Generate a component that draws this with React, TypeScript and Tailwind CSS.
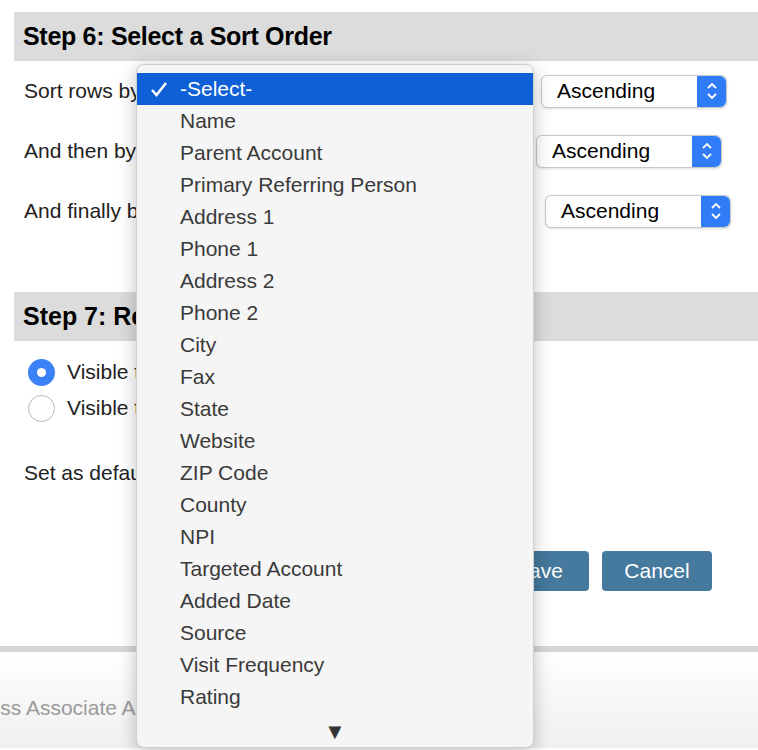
const items = [
  'Name', 'Parent Account', 'Primary Referring Person', 'Address 1', 'Phone 1', 'Address 2',
  'Phone 2', 'City', 'Fax', 'State', 'Website', 'ZIP Code', 'County', 'NPI',
  'Targeted Account', 'Added Date', 'Source', 'Visit Frequency', 'Rating',
];

function Stepper() {
  return (
    <div className="w-[29px] h-full bg-[#2f7cf6] flex items-center justify-center rounded-r-[6px]">
      <svg width="12" height="20" viewBox="0 0 12 20" fill="none" stroke="white" strokeWidth="1.8">
        <path d="M2 7l4-4 4 4M2 13l4 4 4-4" />
      </svg>
    </div>
  );
}

function OrderSelect() {
  return (
    <div className="w-[186px] h-[33px] flex items-center bg-white border border-[#c8c8c8] rounded-[6px] shadow-sm">
      <span className="flex-1 pl-[15px] text-[21px] text-black">Ascending</span>
      <Stepper />
    </div>
  );
}

export default function App() {
  return (
    <div className="relative w-[758px] h-[750px] overflow-hidden bg-white text-[#222]" style={{ fontFamily: '"Liberation Sans", Arial, sans-serif' }}>
      <div className="pt-3 pl-[14px]">
        <div className="h-[49px] bg-[#dcdcdc] flex items-center pl-[9px]">
          <h2 className="text-[25px] font-bold text-black tracking-[-0.3px]">Step 6: Select a Sort Order</h2>
        </div>
        <div className="pl-[10px] text-[21px]">
          <div className="h-[60px] flex items-center"><span className="w-[517px]">Sort rows by</span><OrderSelect /></div>
          <div className="h-[60px] flex items-center"><span className="w-[512px]">And then by</span><OrderSelect /></div>
          <div className="h-[60px] flex items-center"><span className="w-[521px]">And finally by</span><OrderSelect /></div>
        </div>
        <div className="h-[49px] bg-[#dcdcdc] flex items-center pl-[9px] mt-[51px]">
          <h2 className="text-[25px] font-bold text-black">Step 7: Report Visibility</h2>
        </div>
        <div className="pl-[14px] pt-[14px] text-[21px]">
          <div className="flex items-center gap-[12px] h-[34px]">
            <span className="w-[27px] h-[27px] rounded-full bg-[#3b82f6] flex items-center justify-center"><span className="w-[9px] h-[9px] rounded-full bg-white" /></span>
            <span>Visible to me</span>
          </div>
          <div className="flex items-center gap-[12px] h-[38px]">
            <span className="w-[27px] h-[27px] rounded-full border border-[#b5b5b5] bg-white" />
            <span>Visible to everyone</span>
          </div>
          <div className="mt-[30px] -ml-[4px]">Set as default</div>
        </div>
        <div className="flex justify-end gap-[13px] pr-[46px] mt-[62px]">
          <button className="w-[100px] h-[40px] rounded-[4px] bg-[#45799d] text-white text-[21px]">Save</button>
          <button className="w-[110px] h-[40px] rounded-[4px] bg-[#45799d] text-white text-[21px]">Cancel</button>
        </div>
      </div>
      <div className="mt-[55px] h-[6px] bg-[#d6d6d6]" />
      <div className="h-[96px] bg-gradient-to-b from-white to-[#f0f0f0] pt-[40px] text-[21px] text-[#9a9a9a] -ml-[64px] whitespace-nowrap">Business Associate Activity Report</div>

      <div className="absolute left-[136px] top-[64px] w-[398px] h-[684px] bg-[#f5f5f5] rounded-[8px] border border-[#cfcfcf] shadow-[0_4px_18px_rgba(0,0,0,0.25)] pt-[8px] text-[21px]">
        <div className="h-[32px] bg-[#0f5fd6] text-white flex items-center">
          <span className="w-[43px] flex justify-center">
            <svg width="18" height="16" viewBox="0 0 18 16" fill="none" stroke="white" strokeWidth="2.6"><path d="M2 9l4.5 5L16 2" /></svg>
          </span>
          <span>-Select-</span>
        </div>
        {items.map((t) => (
          <div key={t} className="h-[32px] flex items-center pl-[43px] text-[#3a3a3a]">{t}</div>
        ))}
        <div className="flex justify-center mt-[2px] text-[#333] text-[22px]">▼</div>
      </div>
    </div>
  );
}
